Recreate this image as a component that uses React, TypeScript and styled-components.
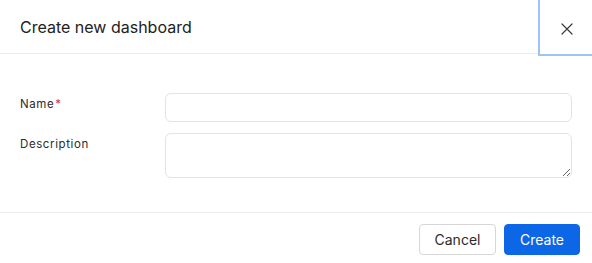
import React from 'react';
import styled, {createGlobalStyle} from 'styled-components';

const GlobalStyle = createGlobalStyle`
  html, body {
    margin: 0;
    padding: 0;
    background: #fff;
  }
  body {
    font-family: Inter, "Noto Sans", sans-serif;
    color: #212529;
    overflow: hidden;
  }
`;

const Dialog = styled.div`
  width: 592px;
  height: 263px;
  display: flex;
  flex-direction: column;
  background: #fff;
`;

const Header = styled.div`
  height: 53px;
  border-bottom: 1px solid #ececec;
  display: flex;
  align-items: flex-start;
  justify-content: space-between;
`;

const Title = styled.h2`
  margin: 0;
  padding: 16px 20px 0;
  font-size: 16px;
  font-weight: 400;
  line-height: 22px;
  color: #222;
`;

const CloseButton = styled.button`
  width: 52px;
  height: 54px;
  flex-shrink: 0;
  border: none;
  background: #fff;
  outline: 2px solid #9fc3f8;
  display: flex;
  align-items: center;
  justify-content: center;
  padding: 4px 0 0 2px;
  color: #333;
  cursor: pointer;
`;

const Body = styled.div`
  padding: 39px 20px 34px;
  display: flex;
  flex-direction: column;
  gap: 11px;
  border-bottom: 1px solid #ececec;
`;

const Row = styled.div`
  display: grid;
  grid-template-columns: 145px 1fr;
  align-items: start;
`;

const Label = styled.label`
  font-size: 11.5px;
  letter-spacing: 0.6px;
  color: #2b2b2b;
  padding-top: 3px;
  line-height: 16px;
`;

const Required = styled.span`
  color: #d9363e;
  margin-left: 1px;
`;

const Input = styled.input`
  box-sizing: border-box;
  height: 29px;
  width: 100%;
  border: 1px solid #e3e3e3;
  border-radius: 6px;
  background: #fff;
  font: inherit;
  font-size: 13px;
  padding: 0 10px;
  outline: none;
`;

const TextArea = styled.textarea`
  box-sizing: border-box;
  display: block;
  height: 45px;
  width: 100%;
  border: 1px solid #e3e3e3;
  border-radius: 6px;
  background: #fff;
  font: inherit;
  font-size: 13px;
  padding: 6px 10px;
  outline: none;
`;

const Footer = styled.div`
  flex: 1;
  display: flex;
  justify-content: flex-end;
  align-items: flex-start;
  gap: 8px;
  padding: 11px 12px 0;
`;

const Button = styled.button<{ $primary?: boolean }>`
  height: 31px;
  min-width: ${p => (p.$primary ? '76px' : '77px')};
  padding: 0 14px;
  border-radius: 4px;
  font-family: Inter, "Noto Sans", sans-serif;
  font-size: 14px;
  cursor: pointer;
  border: 1px solid ${p => (p.$primary ? '#0b67e6' : '#d6d6d6')};
  background: ${p => (p.$primary ? '#0b67e6' : '#fff')};
  color: ${p => (p.$primary ? '#fff' : '#2a2a2a')};
`;

export default function App() {
	return (
		<>
			<GlobalStyle />
			<Dialog>
				<Header>
					<Title>Create new dashboard</Title>
					<CloseButton aria-label="Close">
						<svg width="12" height="12" viewBox="0 0 12 12" fill="none" stroke="#3a3a3a" strokeWidth="1.2" strokeLinecap="round">
							<path d="M1 1L11 11M11 1L1 11" />
						</svg>
					</CloseButton>
				</Header>
				<Body>
					<Row>
						<Label>Name<Required>*</Required></Label>
						<Input />
					</Row>
					<Row>
						<Label>Description</Label>
						<TextArea />
					</Row>
				</Body>
				<Footer>
					<Button>Cancel</Button>
					<Button $primary>Create</Button>
				</Footer>
			</Dialog>
		</>
	);
}
